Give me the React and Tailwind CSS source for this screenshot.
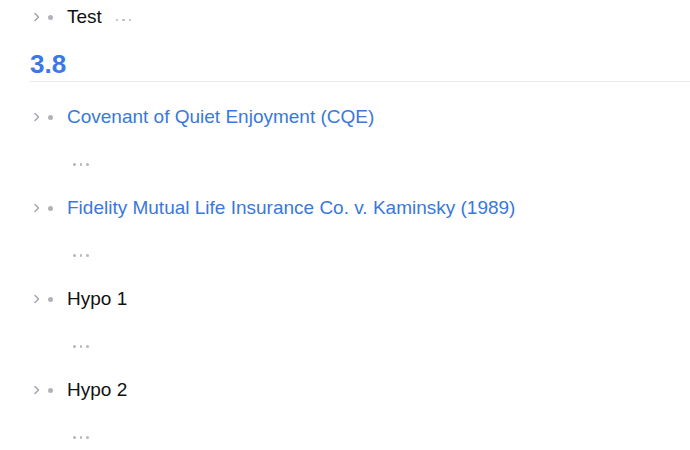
import React from 'react';

const rows = [
  { text: 'Covenant of Quiet Enjoyment (CQE)', link: true },
  { text: 'Fidelity Mutual Life Insurance Co. v. Kaminsky (1989)', link: true },
  { text: 'Hypo 1', link: false },
  { text: 'Hypo 2', link: false },
];

function Chevron() {
  return (
    <svg width="8" height="10" viewBox="0 0 8 10" className="shrink-0">
      <path d="M2 1.5 L5.5 5 L2 8.5" fill="none" stroke="#9ca3af" strokeWidth="1.4" strokeLinecap="round" strokeLinejoin="round" />
    </svg>
  );
}

function Dots({ className = '' }) {
  return (
    <div className={`flex items-center gap-[4px] ${className}`}>
      <span className="w-[2.5px] h-[2.5px] rounded-full bg-[#b4b8bf]" />
      <span className="w-[2.5px] h-[2.5px] rounded-full bg-[#b4b8bf]" />
      <span className="w-[2.5px] h-[2.5px] rounded-full bg-[#b4b8bf]" />
    </div>
  );
}

function Row({ text, link, children }) {
  return (
    <div className="flex items-center h-[30px]">
      <div className="w-[14px] flex justify-center">
        <Chevron />
      </div>
      <div className="w-[12px] flex justify-center">
        <span className="w-[5px] h-[5px] rounded-full bg-[#b0b4ba]" />
      </div>
      <span className={`ml-[11px] text-[19px] ${link ? 'text-[#3a78db]' : 'text-[#111]'}`}>{text}</span>
      {children}
    </div>
  );
}

export default function App() {
  return (
    <div className="w-[690px] h-[450px] bg-white overflow-hidden pl-[30px] font-['Liberation_Sans',Arial,sans-serif]">
      <div className="pt-[2px]">
        <Row text="Test" link={false}>
          <Dots className="ml-[14px] mt-[6px]" />
        </Row>
      </div>
      <div className="mt-[17px] pb-[2px] border-b border-[#e6e8ec]">
        <h2 className="text-[26px] leading-[30px] font-bold text-[#3b78e7]">3.8</h2>
      </div>
      <div className="mt-[20px] flex flex-col">
        {rows.map((r) => (
          <div key={r.text} className="h-[91px]">
            <Row text={r.text} link={r.link} />
            <Dots className="ml-[43px] mt-[31px]" />
          </div>
        ))}
      </div>
    </div>
  );
}
